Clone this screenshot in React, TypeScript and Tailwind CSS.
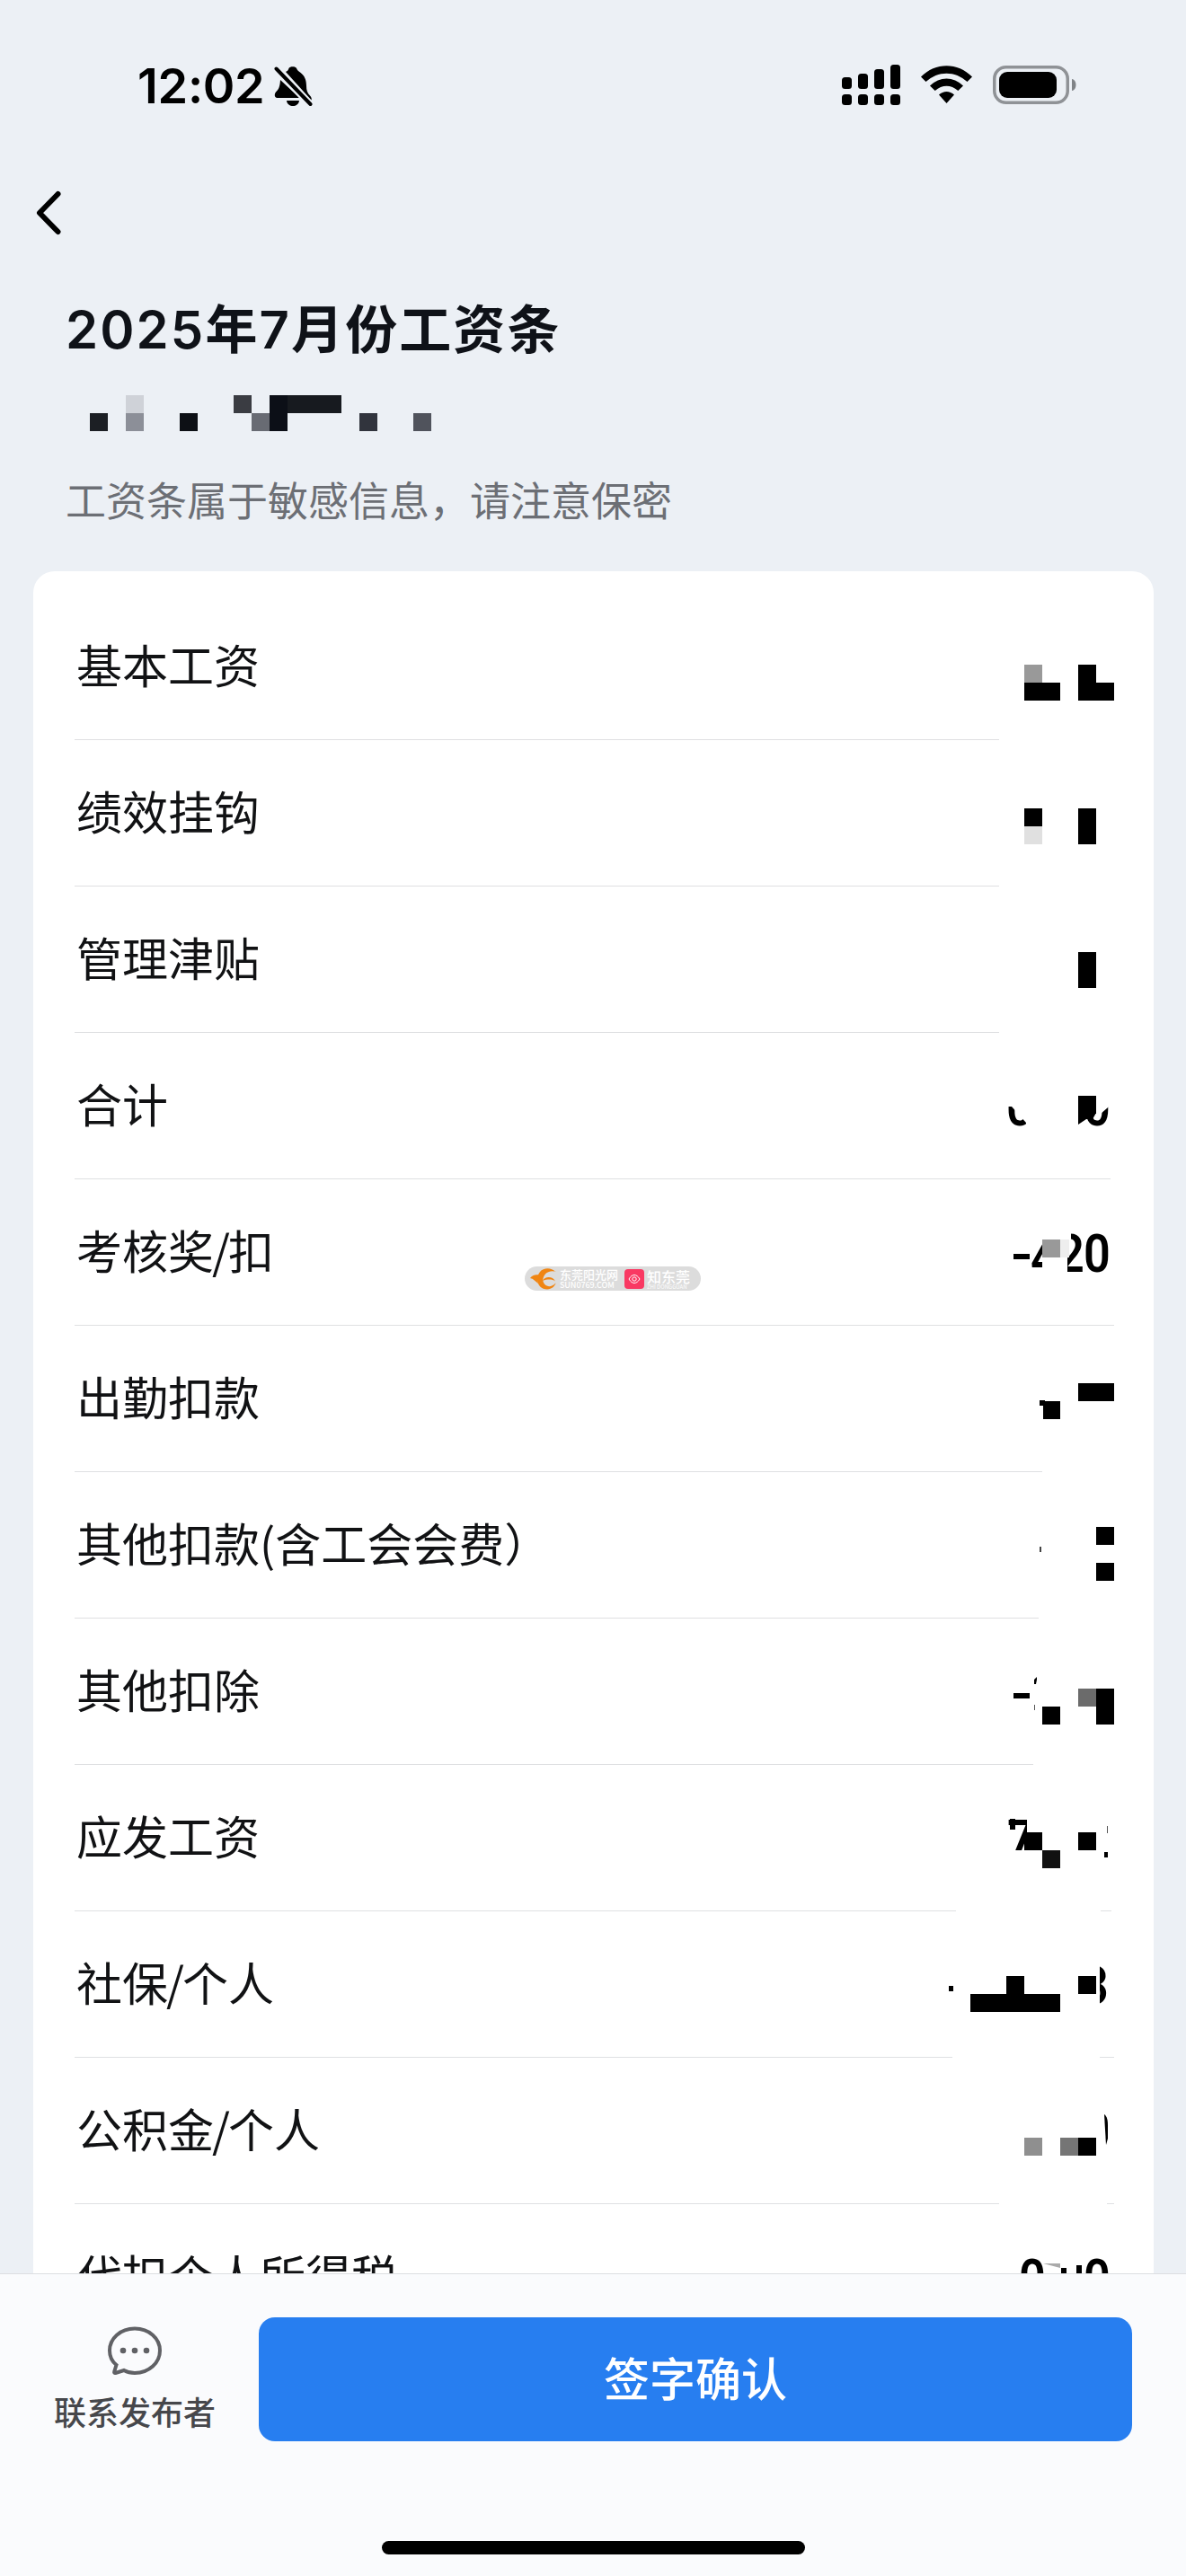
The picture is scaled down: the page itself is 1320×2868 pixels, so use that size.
import type { ReactNode } from 'react';

// [x, y, width, height, color], y is relative to the top of the row
type Block = [number, number, number, number, string?];

interface Item {
    label: string;
    blocks?: Block[];
    lines: [number, number][];
    extra?: ReactNode;
}

interface DigitProps {
    id?: string;
    x: number;
    y?: number;
    clip?: string;
    children: ReactNode;
}

function Digit({ id, x, y = 104, clip, children }: DigitProps) {
    return (
        <g clipPath={clip ? `url(#${id})` : undefined}>
            {clip && <clipPath id={id}><polygon points={clip} /></clipPath>}
            <text transform={`translate(${x} ${y}) scale(.87 1)`} className="font-[Roboto] text-[60px] font-semibold">
                {children}
            </text>
        </g>
    );
}

const items: Item[] = [
    {
        label: '基本工资',
        blocks: [[1140, 80, 20, 20, '#999'], [1140, 100, 40, 20], [1200, 80, 20, 20], [1200, 100, 40, 20]],
        lines: [[83, 1112]],
    },
    {
        label: '绩效挂钩',
        blocks: [[1140, 77, 20, 20], [1140, 97, 20, 20, '#e0e0e0'], [1200, 77, 20, 40]],
        lines: [[83, 1112]],
    },
    { label: '管理津贴', blocks: [[1200, 74, 20, 40]], lines: [[83, 1112]] },
    {
        label: '合计',
        blocks: [[1200, 71, 20, 20]],
        lines: [[83, 1236]],
        extra: (
            <>
                <Digit id="sum-a" x={1120} clip="1110,83 1126,83 1142,101 1142,110 1110,110">0</Digit>
                <Digit id="sum-b" x={1206} clip="1200,91 1225,91 1240,78 1240,110 1200,110">0</Digit>
                <path d="M1200 90h20l-4 7-7 0-9 6z" />
            </>
        ),
    },
    {
        label: '考核奖/扣',
        blocks: [[1128, 84, 18, 6], [1160, 68, 20, 20, '#999'], [1180, 68, 10, 20, '#eee']],
        lines: [[83, 1240]],
        extra: (
            <>
                <Digit id="check-a" x={1147} y={108} clip="1140,60 1160,60 1160,112 1140,112">4</Digit>
                <Digit id="check-b" x={1177} clip="1192,50 1240,50 1240,110 1188,110 1188,88 1192,80">2</Digit>
                <Digit x={1206}>0</Digit>
            </>
        ),
    },
    {
        label: '出勤扣款',
        blocks: [[1200, 65, 40, 20], [1161, 85, 19, 20], [1157, 84, 6, 6]],
        lines: [[83, 1160]],
    },
    {
        label: '其他扣款(含工会会费）',
        blocks: [[1220, 62, 20, 20], [1220, 102, 20, 20], [1157, 84, 2, 6, '#444']],
        lines: [[83, 1156]],
    },
    {
        label: '其他扣除',
        blocks: [[1128, 84, 18, 6], [1160, 99, 20, 20], [1200, 79, 20, 20, '#6b6b6b'], [1220, 79, 20, 40], [1151, 97, 1, 6, '#555']],
        lines: [[83, 1150]],
        extra: <path d="M1151 74v-5l3-3v3l-1 5z" />,
    },
    {
        label: '应发工资',
        blocks: [[1140, 76, 20, 20], [1160, 96, 20, 20, '#111'], [1200, 76, 20, 20], [1232, 69, 1, 8, '#555'], [1229, 98, 4, 6], [1124, 61, 6, 12]],
        lines: [[83, 1064], [1225, 1237]],
        extra: <Digit id="due" x={1121} clip="1110,50 1143,50 1143,96 1110,96">7</Digit>,
    },
    {
        label: '社保/个人',
        blocks: [[1056, 84, 5, 6], [1120, 73, 20, 20], [1080, 93, 100, 20], [1200, 73, 20, 20]],
        lines: [[83, 1060], [1224, 1240]],
        extra: <Digit id="social" x={1204} clip="1224,50 1245,50 1245,110 1224,110">3</Digit>,
    },
    {
        label: '公积金/个人',
        blocks: [[1140, 90, 20, 20, '#8f8f8f'], [1180, 90, 20, 20, '#757575'], [1200, 90, 20, 20]],
        lines: [[83, 1112], [1232, 1240]],
        extra: <path d="M1229 64c3 2 4 6 4 13v14l-2 7z" />,
    },
    {
        label: '代扣个人所得税',
        blocks: [[1181, 72, 6, 20], [1198, 69, 6, 20]],
        lines: [],
        extra: (
            <>
                <Digit x={1134}>0</Digit>
                <path d="M1161 67h19v5z" fill="#aaa" />
                <Digit x={1206}>0</Digit>
            </>
        ),
    },
];

const nameBlocks: Block[] = [
    [100, 20, 20, 20, '#1c1f24'],
    [140, 0, 20, 20, '#cfd2d8'],
    [140, 20, 20, 20, '#8c8f98'],
    [200, 20, 20, 20, '#0d1015'],
    [260, 0, 20, 20, '#3a3c42'],
    [280, 20, 20, 20, '#686b73'],
    [300, 0, 20, 40, '#0c0f17'],
    [320, 0, 60, 20, '#171a1f'],
    [400, 20, 20, 20, '#31343d'],
    [460, 20, 20, 20, '#50535c'],
];

function StatusBar() {
    return (
        <div className="flex h-[189px] items-start justify-between pl-[153px] pr-[122px]">
            <div className="flex pt-[64px]">
                <span className="w-[152px] whitespace-nowrap font-[Inter] text-[54px] font-semibold leading-[64px] tracking-[-0.3px] text-black">12:02</span>
                <svg className="mt-[8px]" width="43" height="48" viewBox="0 0 43 48">
                    <path d="M13 8c2-1 3-2 3.500-4C17.500 1.500 24 1.500 25 4c.6 2 2 3 4 4.500 5 3.500 7 8.500 7 15 0 5 1 8 4 11 2 2 2 4 1.500 5z" />
                    <path d="M7 17L28.500 37H3.500C.5 37 0 33 2 30.500 5.500 27.500 6.500 24 7 17z" />
                    <path d="M14 40h14c-1 8-13 8-14 0z" />
                    <path d="M2 4l38 40" stroke="#ecf0f5" strokeWidth="8" />
                    <path d="M2.500 4.500L40.500 44" stroke="#000" strokeWidth="4" strokeLinecap="round" />
                </svg>
            </div>
            <div className="flex items-start pt-[72px]">
                <svg width="65" height="46" viewBox="0 0 65 46">
                    <rect x="0" y="14" width="11" height="13" rx="3.500" />
                    <rect x="18" y="10" width="11" height="17" rx="3.500" />
                    <rect x="36" y="5" width="11" height="22" rx="3.500" />
                    <rect x="54" y="0" width="11" height="27" rx="3.500" />
                    {[0, 18, 36, 54].map((x) => <rect key={x} x={x} y="33" width="11" height="12" rx="3.500" />)}
                </svg>
                <svg className="ml-[23px] mt-px" width="57" height="43" viewBox="0 0 57 43">
                    <path d="M0 12.500C16-4 41-4 57 12.500L51.500 18C38 5.500 19 5.500 5.500 18z" />
                    <path d="M10 22.500c11-10.700 26-10.700 37 0L41.300 28c-8-7-17.600-7-25.600 0z" />
                    <path d="M20 32.500c5-4.700 12-4.700 17 0L28.500 42z" />
                </svg>
                <svg className="ml-[23px] mt-px" width="93" height="43" viewBox="0 0 93 43">
                    <rect x="1.750" y="1.750" width="81.500" height="39.500" rx="13" fill="none" stroke="#8f9296" strokeWidth="3.500" />
                    <rect x="7" y="7" width="64" height="29" rx="9" />
                    <path d="M88 15c6 1 6 12 0 13z" fill="#808387" />
                </svg>
            </div>
        </div>
    );
}

function Watermark() {
    return (
        <div className="absolute left-[584px] top-[1410px] flex h-[27px] w-[196px] items-center rounded-full bg-[#dcdcdc] pl-[6px]">
            <svg width="30" height="24" viewBox="0 0 30 24">
                <g fill="#f08512">
                    <path d="M28 4C24-1 15-1 11 4c-2 3-3 5-3 8 0 7 5 11.500 11 11.500 5 0 9-4 9.500-7-4 4-8 4.500-11 2.500-4-3-4-8-1-12 3-3.500 8-4.500 12.500-3z" />
                    <path d="M0 11c2-3 6-4.500 10-3.500l-2 8C6 12.500 3.500 12 0 11z" />
                    <path d="M14 14c2-5 11-6 14 .5-3-2.500-9-2.500-14-.5z" />
                    <path d="M3 12l6 5-1-5z" />
                </g>
            </svg>
            <div className="ml-[3px] w-[66px] whitespace-nowrap font-['Noto_Sans_CJK_SC',sans-serif] text-white">
                <div className="text-[13px] font-medium leading-[14px]">东莞阳光网</div>
                <div className="text-[9px] font-medium leading-[9px] tracking-[-0.1px]">SUN0769.COM</div>
            </div>
            <svg className="ml-[6px]" width="22" height="22" viewBox="0 0 22 22">
                <rect width="22" height="22" rx="4" fill="#f93963" />
                <path d="M5 11c3.500-6 8.500-6 12 0-3.500 6-8.500 6-12 0z" fill="none" stroke="#fff" strokeWidth="1" />
                <circle cx="11" cy="11" r="2.200" fill="none" stroke="#fff" />
            </svg>
            <div className="ml-[3px] whitespace-nowrap font-['Noto_Sans_CJK_SC',sans-serif] text-white">
                <div className="text-[16px] font-medium leading-[17px]">知东莞</div>
                <div className="text-[6px] leading-[5px]">ZHI DONGGUAN</div>
            </div>
        </div>
    );
}

function Row({ item }: { item: Item }) {
    const [first, second] = item.label.split('/');

    return (
        <div className="relative flex h-[163px] shrink-0 items-center pb-[6px] pl-[48px]">
            <span className="text-[51px] leading-[60px] text-[#111214]">
                {first}
                {second && <span className="-mx-[2px]">/</span>}
                {second}
            </span>
            {/* masked amount and divider */}
            <svg className="absolute -left-[37px] top-0 overflow-visible" width="1320" height="163" viewBox="0 0 1320 163">
                {item.lines.map(([from, to]) => <rect key={from} x={from} y="163" width={to - from} height="1" fill="#dfe0e2" />)}
                {item.extra}
                {item.blocks?.map(([x, y, w, h, color], i) => <rect key={i} x={x} y={y} width={w} height={h} fill={color || '#000'} />)}
            </svg>
        </div>
    );
}

export default function App() {
    return (
        <div className="relative flex h-[2868px] w-[1320px] flex-col overflow-hidden bg-[#ecf0f5] font-['Noto_Sans_CJK_SC',sans-serif]">
            <StatusBar />
            <div className="h-[137px] pl-[36px] pt-[20px]">
                <svg width="36" height="56" viewBox="0 0 36 56">
                    <path d="M28.500 7L8 28l20.500 21" fill="none" stroke="#000" strokeWidth="6" strokeLinecap="round" strokeLinejoin="round" />
                </svg>
            </div>
            <h1 className="h-[114px] whitespace-nowrap pl-[73px] font-[Inter,'Noto_Sans_CJK_SC',sans-serif] text-[58px] font-semibold leading-[82px] tracking-[2.100px] text-[#0f1218]">2025年7月份工资条</h1>
            <svg width="1320" height="40" viewBox="0 0 1320 40" className="shrink-0">
                {nameBlocks.map(([x, y, w, h, color]) => <rect key={`${x}-${y}`} x={x} y={y} width={w} height={h} fill={color} />)}
            </svg>
            <p className="h-[156px] whitespace-nowrap pl-[73px] pt-[46px] text-[45px] leading-[60px] text-[#6c6f75]">工资条属于敏感信息，请注意保密</p>
            <div className="mx-[37px] mr-[36px] flex h-[1895px] flex-col overflow-hidden rounded-t-[24px] bg-white pt-[24px]">
                {items.map((item) => <Row key={item.label} item={item} />)}
            </div>
            <div className="flex h-[337px] shrink-0 items-start border-t border-[#dcdee1] bg-[#fafbfd] pr-[60px] pt-[48px]">
                <div className="flex w-[288px] flex-col items-center pl-[12px] pt-[10px]">
                    <svg width="62" height="56" viewBox="0 0 62 56">
                        <path d="M31 2.500c16 0 28 11 28 24.500S47 52 31 52c-4.500 0-8.500-1-12-3L9.500 52c-1 .3-1.600-.5-1.300-1.500L10.500 43C5.500 39 3 33.500 3 27 3 13.500 15 2.500 31 2.500z" fill="none" stroke="#606165" strokeWidth="4" />
                        <g fill="#606165">
                            <circle cx="18" cy="27" r="3.300" />
                            <circle cx="31" cy="27" r="3.300" />
                            <circle cx="44" cy="27" r="3.300" />
                        </g>
                    </svg>
                    <span className="mt-[12px] text-[36px] font-medium leading-[52px] text-[#46474b]">联系发布者</span>
                </div>
                <button className="h-[138px] flex-1 rounded-[18px] bg-[#277ef0] pb-[6px] text-[51px] font-medium text-white">签字确认</button>
            </div>
            <div className="absolute bottom-[24px] left-[425px] h-[15px] w-[471px] rounded-full bg-black" />
            <Watermark />
        </div>
    );
}
